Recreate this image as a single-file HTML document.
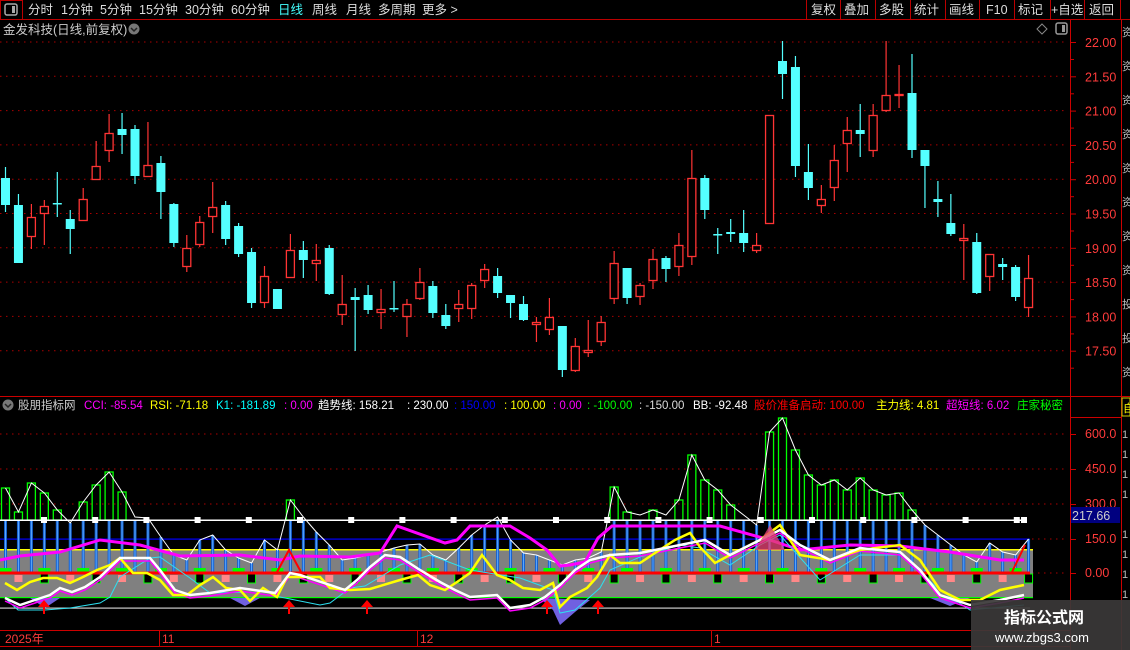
<!DOCTYPE html>
<html><head><meta charset="utf-8"><style>
body{margin:0;background:#000;width:1130px;height:650px;overflow:hidden;font-family:"Liberation Sans","Noto Sans CJK SC",sans-serif;}
svg{position:absolute;left:0;top:0}
text{font-family:"Liberation Sans","Noto Sans CJK SC",sans-serif}
</style></head><body>
<svg id="s" width="1130" height="650" xmlns="http://www.w3.org/2000/svg">
<rect width="1130" height="650" fill="#000"/>
<line x1="0" y1="19.5" x2="1130" y2="19.5" stroke="#b00" stroke-width="1"/>
<rect x="0.5" y="0.5" width="22" height="19" fill="none" stroke="#b00"/>
<rect x="5" y="4" width="12" height="11" rx="2" fill="none" stroke="#aaa" stroke-width="1.5"/>
<rect x="12" y="6" width="3" height="7" fill="#aaa"/>
<g font-size="12.5" fill="#ddd">
<text x="28" y="14">分时</text><text x="61" y="14">1分钟</text><text x="100" y="14">5分钟</text><text x="139" y="14">15分钟</text><text x="185" y="14">30分钟</text><text x="231" y="14">60分钟</text><text x="278" y="14" fill="#4ff">日线</text><text x="312" y="14">周线</text><text x="346" y="14">月线</text><text x="378" y="14">多周期</text><text x="422" y="14">更多 &gt;</text>
<text x="811" y="14">复权</text><text x="844" y="14">叠加</text><text x="879" y="14">多股</text><text x="914" y="14">统计</text><text x="949" y="14">画线</text><text x="986" y="14">F10</text><text x="1018" y="14">标记</text><text x="1051" y="14">+自选</text><text x="1089" y="14">返回</text>
</g>
<g fill="#b00"><rect x="806" y="0" width="1" height="19"/><rect x="840" y="0" width="1" height="19"/><rect x="875" y="0" width="1" height="19"/><rect x="910" y="0" width="1" height="19"/><rect x="945" y="0" width="1" height="19"/><rect x="979" y="0" width="1" height="19"/><rect x="1014" y="0" width="1" height="19"/><rect x="1050" y="0" width="1" height="19"/><rect x="1084" y="0" width="1" height="19"/><rect x="1120" y="0" width="1" height="19"/></g>
<text x="3" y="34" font-size="12.5" fill="#ccc">金发科技(日线,前复权)</text>
<circle cx="134" cy="29" r="5.5" fill="#777"/><path d="M131 28l3 3 3-3" stroke="#222" stroke-width="1.5" fill="none"/>
<path d="M1042 24l5 5-5 5-5-5z" fill="none" stroke="#888"/>
<rect x="1056" y="23" width="11" height="11" rx="2" fill="none" stroke="#999" stroke-width="1.5"/><rect x="1062" y="25" width="3" height="7" fill="#999"/>
<g fill="#c00"><rect x="1070" y="20" width="1" height="630"/><rect x="1121" y="20" width="1" height="630"/></g>
<rect x="0" y="396" width="1130" height="1" fill="#c00"/>
<rect x="0" y="630" width="1070" height="1" fill="#c00"/>
<rect x="0" y="646" width="1070" height="1" fill="#c00"/>
<g id="grid"></g>
<g font-size="12.5" fill="#ff3b3b" id="plab"></g>
<g id="ind"></g>
<g id="cand"></g>
<circle cx="8" cy="405" r="5.5" fill="#777"/><path d="M5 404l3 3 3-3" stroke="#222" stroke-width="1.5" fill="none"/>
<g font-size="11.5">
<text x="18" y="409" fill="#ccc">股朋指标网</text>
<text x="84" y="409" fill="#f0f">CCI: -85.54</text>
<text x="150" y="409" fill="#ff0">RSI: -71.18</text>
<text x="216" y="409" fill="#0ff">K1: -181.89</text>
<text x="284" y="409" fill="#f0f">: 0.00</text>
<text x="318" y="409" fill="#fff">趋势线: 158.21</text>
<text x="407" y="409" fill="#fff">: 230.00</text>
<text x="454" y="409" fill="#00f">: 150.00</text>
<text x="504" y="409" fill="#ff0">: 100.00</text>
<text x="553" y="409" fill="#f0f">: 0.00</text>
<text x="587" y="409" fill="#0f0">: -100.00</text>
<text x="639" y="409" fill="#ddd">: -150.00</text>
<text x="693" y="409" fill="#fff">BB: -92.48</text>
<text x="754" y="409" fill="#f00">股价准备启动: 100.00</text>
<text x="876" y="409" fill="#ff0">主力线: 4.81</text>
<text x="946" y="409" fill="#f0f">超短线: 6.02</text>
<text x="1017" y="409" fill="#0f0">庄家秘密</text>
</g>
<rect x="1071" y="397" width="50" height="20" fill="#000"/>
<rect x="1071" y="417" width="50" height="1" fill="#c00"/>
<g font-size="12.5" fill="#ff3b3b"><text x="1085" y="438">600.0</text><text x="1085" y="473">450.0</text><text x="1085" y="508">300.0</text><text x="1085" y="543">150.0</text><text x="1085" y="577">0.00</text></g>
<rect x="1071" y="507" width="49" height="16" fill="#000080"/>
<text x="1072" y="520" font-size="12.5" fill="#ccc">217.66</text>
<g font-size="11" fill="#bbb">
<text x="1122" y="36">资</text><text x="1122" y="70">资</text><text x="1122" y="104">资</text><text x="1122" y="138">资</text><text x="1122" y="172">资</text><text x="1122" y="206">资</text><text x="1122" y="240">资</text><text x="1122" y="274">资</text><text x="1122" y="308">投</text><text x="1122" y="342">投</text><text x="1122" y="376">资</text>
<text x="1122" y="438">1</text><text x="1122" y="458">1</text><text x="1122" y="478">1</text><text x="1122" y="498">1</text><text x="1122" y="538">1</text><text x="1122" y="558">1</text><text x="1122" y="578">1</text><text x="1122" y="598">1</text>
</g>
<rect x="1122" y="398" width="8" height="18" fill="none" stroke="#cc0"/><text x="1123" y="412" font-size="11" fill="#ff0">自</text>
<g font-size="12" fill="#ff3b3b"><text x="5" y="643">2025年</text><text x="162" y="643">11</text><text x="420" y="643">12</text><text x="714" y="643">1</text></g>
<g fill="#c00"><rect x="159" y="630" width="1" height="16"/><rect x="417" y="630" width="1" height="16"/><rect x="711" y="630" width="1" height="16"/></g>
<rect x="971" y="600" width="159" height="50" fill="#3a3838" opacity="0.93"/>
<text x="1004" y="623" font-size="16" font-weight="bold" fill="#fff">指标公式网</text>
<text x="995" y="642" font-size="13" fill="#fff">www.zbgs3.com</text>
</svg>
<script>
(function(){
var NS="http://www.w3.org/2000/svg";
function el(p,t,a){var e=document.createElementNS(NS,t);for(var k in a)e.setAttribute(k,a[k]);document.getElementById(p).appendChild(e);return e;}
function R(p,x,y,w,h,f){return el(p,"rect",{x:x,y:y,width:w,height:Math.max(h,0.5),fill:f});}
for(var i=0;i<10;i++){var y=42+i*34.3;
el("grid","line",{x1:0,y1:y,x2:1068,y2:y,stroke:"#a00","stroke-dasharray":"1.5 4.5"});
R("grid",1070,y,6,1,"#c00");R("grid",1070,y+17,4,1,"#c00");
var t=el("plab","text",{x:1085,y:y+5});t.textContent=(22-i*0.5).toFixed(2);}
[434,469,504,539,573].forEach(function(y){el("grid","line",{x1:0,y1:y,x2:1068,y2:y,stroke:"#a00","stroke-dasharray":"1.5 4.5"});R("grid",1070,y,6,1,"#c00");});
var C=[["c",178,205,167,212],["c",205,263,194,263],["r",217,237,204,249],["r",206,214,200,245],["c",203,203,172,217],["c",219,229,210,254],["r",199,221,188,221],["r",166,180,141,180],["r",133,151,114,162],["c",129,135,113,154],
["c",129,176,125,184],["r",165,177,122,177],["c",163,192,156,219],["c",204,243,203,247],["r",248,267,235,272],["r",222,245,216,247],["r",207,217,182,233],["c",205,239,201,245],["c",226,254,223,257],["c",252,303,248,308],
["r",276,303,266,308],["c",289,309,289,309],["r",250,278,234,278],["c",250,260,241,278],["r",260,264,244,281],["c",248,294,245,295],["r",304,315,275,325],["c",297,300,288,351],["c",295,310,285,314],["r",309,313,289,329],
["c",308,308,281,312],["r",304,317,299,337],["r",282,299,268,300],["c",286,313,281,318],["c",315,326,304,329],["r",304,309,290,322],["r",285,309,283,319],["r",269,281,264,288],["c",276,293,268,298],["c",295,303,295,318],
["c",304,320,296,321],["r",322,325,317,342],["r",317,330,298,335],["c",326,370,326,377],["r",346,371,338,372],["r",350,353,320,357],["r",322,342,316,346],["r",263,299,251,304],["c",268,298,268,304],["r",285,297,283,305],
["r",259,281,249,289],["c",258,269,256,282],["r",245,267,233,276],["r",178,257,150,265],["c",178,210,175,219],["c",234,234,228,254],["c",232,234,219,242],["c",233,243,210,252],["r",245,251,233,253],["r",115,224,115,224],
["c",61,74,41,99],["c",67,166,56,177],["c",172,188,144,200],["r",199,206,185,213],["r",160,188,145,201],["r",130,144,117,172],["c",130,134,104,157],["r",115,151,104,157],["r",95,111,41,112],["r",94,94,65,108],
["c",93,150,54,158],["c",150,166,150,208],["c",199,202,181,217],["c",223,234,194,236],["r",238,241,224,280],["c",242,293,233,294],["r",254,277,254,291],["c",264,267,258,280],["c",267,297,265,301],["r",278,308,255,317]];
function X(i){return 5.5+i*12.95;}
C.forEach(function(c,i){var x=X(i),col=c[0]=="c"?"#54ffff":"#ff3434";
R("cand",x-0.6,c[3],1.2,c[4]-c[3],col);
var h=Math.max(c[2]-c[1],1.5);
if(c[0]=="c")R("cand",x-4.5,c[1],9,h,col);
else el("cand","rect",{x:x-4,y:c[1]+0.5,width:8,height:Math.max(h-1,1),fill:"#000",stroke:col,"stroke-width":1.3});});
var W=[488,512,483,493,510,523,502,485,472,492,517,518,537,555,560,540,535,550,558,563,540,550,500,517,532,545,560,558,555,552,548,545,544,555,560,548,535,525,517,540,553,555,560,565,560,558,552,487,512,515,510,515,500,455,480,490,505,515,525,432,418,450,475,485,480,490,478,490,495,493,510,525,535,545,555,562,543,552,555,539];
R("ind",0,550,1033,48,"#808080");
R("ind",0,538.5,1030,1.2,"#00f");
R("ind",0,549,1033,1.5,"#ff0");
R("ind",0,597,1033,1.2,"#0f0");
R("ind",0,607.5,1030,1.2,"#ccc");
for(var i=0;i<80;i++){var x=X(i),y=W[i];var tp=Math.max(y,520);
R("ind",x-1.5,tp,3,573-tp,"#1560d0");
R("ind",x-0.5,tp,1,573-tp,"#5aa8ff");
if(y<515)el("ind","rect",{x:x-4,y:y,width:8,height:520-y,fill:"none",stroke:"#0f0","stroke-width":1.3});
if(i%3==0)R("ind",x-6,568,12,4,"#0f0");
if(i%4==1)R("ind",x-4,575,8,7,"#f88");
if(i%4==3)el("ind","rect",{x:x-4,y:574,width:8,height:9,fill:"#000",stroke:"#0f0"});}
R("ind",0,519.5,1025,1.5,"#fff");
for(var k=0;k<20;k++){var x=44+k*51.2;if(x<1026)R("ind",x-3,517,6,6,"#fff");}
R("ind",1021,517,6,6,"#fff");
el("ind","polyline",{points:W.map(function(y,i){return X(i)+","+y}).join(" "),fill:"none",stroke:"#fff","stroke-width":1});
R("ind",0,571.5,1030,3,"#f00");
function P(a){return a.map(function(p){return p[0]+","+p[1]}).join(" ");}
var mag=[[0,560],[20,556],[60,552],[100,540],[140,545],[180,556],[240,555],[280,560],[300,556],[350,557],[380,553],[397,526],[445,543],[457,540],[470,526],[510,526],[530,538],[547,550],[560,566],[570,565],[585,562],[598,538],[612,526],[688,526],[720,526],[770,540],[800,550],[850,545],[900,546],[950,552],[1000,560],[1024,560]];
el("ind","polyline",{points:P(mag),fill:"none",stroke:"#f0f","stroke-width":3});
var cy=[[5,598],[18,610],[45,610],[70,608],[100,603],[110,597],[120,577],[150,558],[160,557],[190,578],[210,593],[250,592],[280,597],[320,605],[330,603],[350,588],[365,586],[400,565],[430,555],[470,570],[520,578],[553,590],[560,613],[575,610],[600,588],[610,570],[640,557],[680,545],[700,548],[730,565],[760,545],[780,535],[820,580],[860,555],[900,555],[940,590],[970,610],[1024,605]];
var wh=[[5,598],[20,605],[35,600],[50,595],[60,588],[72,592],[85,587],[100,577],[120,558],[150,558],[160,570],[175,590],[190,595],[210,593],[240,588],[275,593],[290,573],[300,575],[345,590],[357,580],[370,567],[385,555],[400,557],[420,570],[440,582],[455,590],[470,597],[497,595],[510,608],[530,605],[545,597],[560,585],[575,570],[590,560],[610,555],[640,553],[680,545],[705,540],[730,555],[760,540],[780,530],[800,545],[830,560],[860,548],[900,552],[920,570],[940,595],[970,605],[1000,600],[1024,595]];
var yl=[[5,583],[17,590],[30,582],[43,578],[57,578],[70,583],[83,577],[97,570],[110,565],[120,558],[133,573],[147,573],[160,580],[173,595],[187,595],[200,585],[213,577],[226,588],[240,590],[250,601],[263,588],[277,597],[287,577],[300,577],[320,577],[330,588],[350,590],[370,589],[400,580],[418,575],[430,585],[445,590],[460,580],[470,573],[482,555],[497,575],[510,580],[523,588],[540,590],[553,583],[560,607],[570,597],[587,588],[597,577],[610,555],[620,563],[640,563],[655,553],[675,540],[690,533],[700,547],[715,563],[730,555],[760,540],[780,525],[800,555],[830,560],[860,550],[900,545],[920,560],[940,590],[960,600],[980,600],[1000,590],[1024,585]];
el("ind","polygon",{points:"540,598 553,610 560,625 575,612 590,600",fill:"#7060e0"});
el("ind","polygon",{points:"30,598 45,608 60,598",fill:"#7060e0"});
el("ind","polygon",{points:"230,598 245,606 260,598",fill:"#7060e0"});
el("ind","polygon",{points:"930,598 950,606 970,598",fill:"#7060e0"});
el("ind","polyline",{points:P(cy),fill:"none",stroke:"#2de0f0","stroke-width":1});
el("ind","polyline",{points:P(wh.map(function(p){return[p[0],p[1]+3]})),fill:"none",stroke:"#f0f","stroke-width":1.5});
el("ind","polyline",{points:P(yl),fill:"none",stroke:"#ff0","stroke-width":2.5});
el("ind","polyline",{points:P(wh),fill:"none",stroke:"#fff","stroke-width":2.5});
el("ind","polyline",{points:"277,572 289,550 301,572",fill:"none",stroke:"#f00","stroke-width":2});
el("ind","polyline",{points:"1012,572 1025,545",fill:"none",stroke:"#f00","stroke-width":2});
el("ind","polygon",{points:"755,550 770,525 785,550",fill:"#e04070",opacity:0.8});
[44,289,367,547,598].forEach(function(x){el("ind","polygon",{points:(x-6)+",607 "+x+",600 "+(x+6)+",607",fill:"#f00"});R("ind",x-1,604,2,10,"#f00");});
})();
</script>
</body></html>
